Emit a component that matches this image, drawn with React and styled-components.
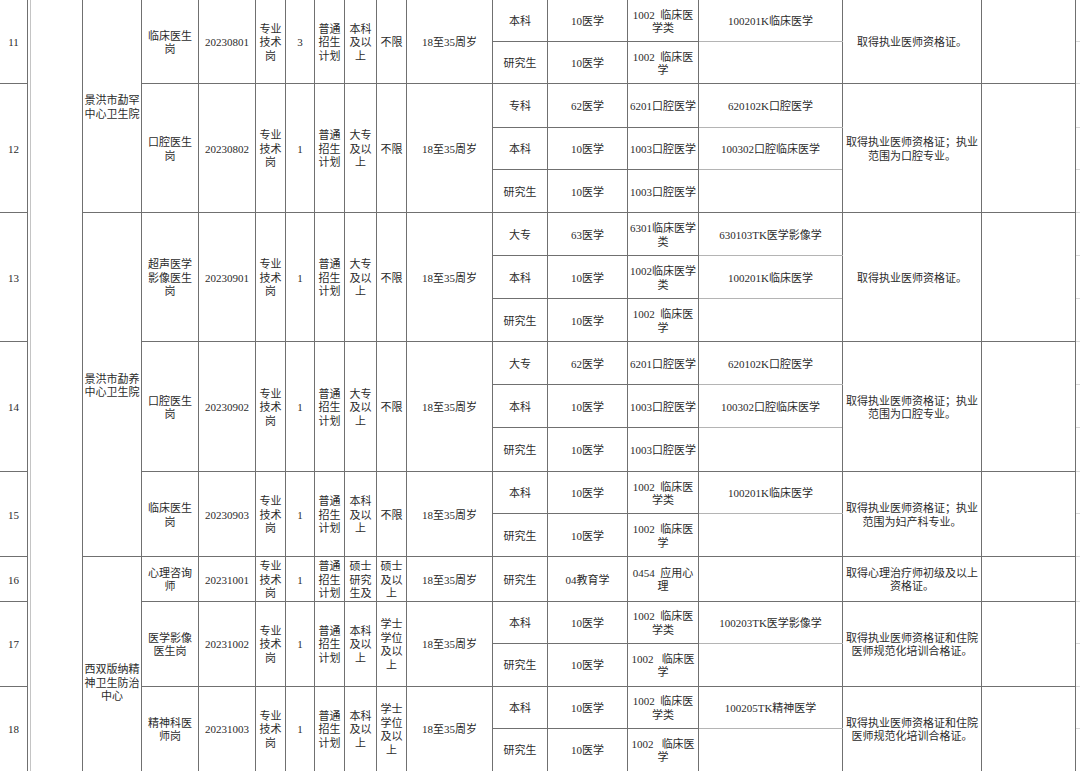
import React from "react";
import styled, { createGlobalStyle } from "styled-components";

const GlobalStyle = createGlobalStyle`
  html, body {
    margin: 0;
    padding: 0;
    background: #fff;
    overflow: hidden;
  }
  body {
    font-family: "Liberation Serif", "Noto Sans CJK SC", serif;
    color: #2b2b2b;
  }
`;

const widths = [28, 55, 59, 57, 57, 30, 29, 30, 32, 30, 86, 55, 80, 71, 144, 139, 94, 100];

const plan = "普通\n招生\n计划";
const tech = "专业\n技术\n岗";
const age = "18至35周岁";

const groups = [
  {
    unit: "景洪市勐罕\n中心卫生院",
    rows: [
      {
        no: 11, name: "临床医生\n岗", code: "20230801", count: "3",
        edu: "本科\n及以\n上", degree: "不限", req: "取得执业医师资格证。",
        subs: [
          { h: 42, level: "本科", cat: "10医学", sub: "1002  临床医\n学类", major: "100201K临床医学" },
          { h: 42, level: "研究生", cat: "10医学", sub: "1002  临床医\n学", major: "" },
        ],
      },
      {
        no: 12, name: "口腔医生\n岗", code: "20230802", count: "1",
        edu: "大专\n及以\n上", degree: "不限", req: "取得执业医师资格证；执业\n范围为口腔专业。",
        subs: [
          { h: 44, level: "专科", cat: "62医学", sub: "6201口腔医学", major: "620102K口腔医学" },
          { h: 42, level: "本科", cat: "10医学", sub: "1003口腔医学", major: "100302口腔临床医学" },
          { h: 43, level: "研究生", cat: "10医学", sub: "1003口腔医学", major: "" },
        ],
      },
    ],
  },
  {
    unit: "景洪市勐养\n中心卫生院",
    rows: [
      {
        no: 13, name: "超声医学\n影像医生\n岗", code: "20230901", count: "1",
        edu: "大专\n及以\n上", degree: "不限", req: "取得执业医师资格证。",
        subs: [
          { h: 43, level: "大专", cat: "63医学", sub: "6301临床医学\n类", major: "630103TK医学影像学" },
          { h: 43, level: "本科", cat: "10医学", sub: "1002临床医学\n类", major: "100201K临床医学" },
          { h: 43, level: "研究生", cat: "10医学", sub: "1002  临床医\n学", major: "" },
        ],
      },
      {
        no: 14, name: "口腔医生\n岗", code: "20230902", count: "1",
        edu: "大专\n及以\n上", degree: "不限", req: "取得执业医师资格证；执业\n范围为口腔专业。",
        subs: [
          { h: 43, level: "大专", cat: "62医学", sub: "6201口腔医学", major: "620102K口腔医学" },
          { h: 43, level: "本科", cat: "10医学", sub: "1003口腔医学", major: "100302口腔临床医学" },
          { h: 44, level: "研究生", cat: "10医学", sub: "1003口腔医学", major: "" },
        ],
      },
      {
        no: 15, name: "临床医生\n岗", code: "20230903", count: "1",
        edu: "本科\n及以\n上", degree: "不限", req: "取得执业医师资格证；执业\n范围为妇产科专业。",
        subs: [
          { h: 42, level: "本科", cat: "10医学", sub: "1002  临床医\n学类", major: "100201K临床医学" },
          { h: 43, level: "研究生", cat: "10医学", sub: "1002  临床医\n学", major: "" },
        ],
      },
    ],
  },
  {
    unit: "西双版纳精\n神卫生防治\n中心",
    shift: 36,
    rows: [
      {
        no: 16, name: "心理咨询\n师", code: "20231001", count: "1",
        edu: "硕士\n研究\n生及\n以上", degree: "硕士\n及以\n上", req: "取得心理治疗师初级及以上\n资格证。",
        subs: [
          { h: 44, level: "研究生", cat: "04教育学", sub: "0454  应用心\n理", major: "" },
        ],
      },
      {
        no: 17, name: "医学影像\n医生岗", code: "20231002", count: "1",
        edu: "本科\n及以\n上", degree: "学士\n学位\n及以\n上", req: "取得执业医师资格证和住院\n医师规范化培训合格证。",
        subs: [
          { h: 42, level: "本科", cat: "10医学", sub: "1002  临床医\n学类", major: "100203TK医学影像学" },
          { h: 43, level: "研究生", cat: "10医学", sub: "1002   临床医\n学", major: "" },
        ],
      },
      {
        no: 18, name: "精神科医\n师岗", code: "20231003", count: "1",
        edu: "本科\n及以\n上", degree: "学士\n学位\n及以\n上", req: "取得执业医师资格证和住院\n医师规范化培训合格证。",
        subs: [
          { h: 42, level: "本科", cat: "10医学", sub: "1002  临床医\n学类", major: "100205TK精神医学" },
          { h: 43, level: "研究生", cat: "10医学", sub: "1002   临床医\n学", major: "" },
        ],
      },
    ],
  },
];

const Page = styled.div`
  width: 1080px;
  height: 771px;
  overflow: hidden;
`;

const Sheet = styled.table`
  border-collapse: collapse;
  table-layout: fixed;
  width: ${widths.reduce((a, b) => a + b, 0)}px;
  margin: -1px 0 0 -1px;
  font-size: 11px;
  line-height: 13.5px;
`;

const Row = styled.tr`
  height: ${(p) => p.$h}px;
`;

const Cell = styled.td`
  border: 1px solid #707070;
  border-bottom-color: ${(p) => (p.$light ? "#b4b4b4" : "#707070")};
  padding: ${(p) => (p.$shift ?? 0) + 3}px 0 0;
  text-align: center;
  vertical-align: middle;
  white-space: pre;
  overflow: hidden;
`;

const BlankCell = styled.td`
  border: 1px solid #707070;
  box-shadow: inset 2px 0 0 #fff, inset 3px 0 0 #c4c4c4;
  padding: 0;
`;

const EdgeCell = styled.td`
  border: 1px solid #707070;
  border-bottom-color: #d8d8d8;
  padding: 0;
`;

const Clip = styled.div`
  max-height: ${(p) => p.$lines * 13.5}px;
  overflow: hidden;
`;

export default function App() {
  let first = true;
  const total = groups.reduce(
    (n, g) => n + g.rows.reduce((m, r) => m + r.subs.length, 0),
    0
  );

  const trs = [];
  groups.forEach((g) => {
    const gSpan = g.rows.reduce((m, r) => m + r.subs.length, 0);
    g.rows.forEach((r, ri) => {
      const span = r.subs.length;
      r.subs.forEach((s, si) => {
        const head = si === 0;
        const lastSub = si === span - 1;
        trs.push(
          <Row key={`${r.no}-${si}`} $h={s.h}>
            {head && <Cell rowSpan={span}>{r.no}</Cell>}
            {first && <BlankCell rowSpan={total} />}
            {head && ri === 0 && (
              <Cell rowSpan={gSpan} $shift={g.shift}>
                {g.unit}
              </Cell>
            )}
            {head && (
              <>
                <Cell rowSpan={span}>{r.name}</Cell>
                <Cell rowSpan={span}>{r.code}</Cell>
                <Cell rowSpan={span}>{tech}</Cell>
                <Cell rowSpan={span}>{r.count}</Cell>
                <Cell rowSpan={span}>{plan}</Cell>
                <Cell rowSpan={span}>
                  <Clip $lines={span === 1 ? 3 : 6}>{r.edu}</Clip>
                </Cell>
                <Cell rowSpan={span}>{r.degree}</Cell>
                <Cell rowSpan={span}>{age}</Cell>
              </>
            )}
            <Cell>{s.level}</Cell>
            <Cell>{s.cat}</Cell>
            <Cell>{s.sub}</Cell>
            <Cell $light={!lastSub}>{s.major}</Cell>
            {head && (
              <>
                <Cell rowSpan={span}>{r.req}</Cell>
                <Cell rowSpan={span} />
              </>
            )}
            <EdgeCell />
          </Row>
        );
        first = false;
      });
    });
  });

  return (
    <Page>
      <GlobalStyle />
      <Sheet>
        <colgroup>
          {widths.map((w, i) => (
            <col key={i} style={{ width: w }} />
          ))}
        </colgroup>
        <tbody>{trs}</tbody>
      </Sheet>
    </Page>
  );
}
